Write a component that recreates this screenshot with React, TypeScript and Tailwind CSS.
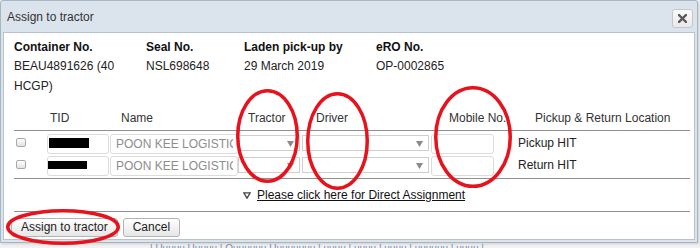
import React from "react";

function Arrow() {
  return (
    <svg width="7" height="6" viewBox="0 0 7 6" className="absolute right-[5px] top-[5px]">
      <polygon points="0,0 7,0 3.5,6" fill="#8a8a8a" />
    </svg>
  );
}

function Row({ pickup, redact }: { pickup: string; redact: string }) {
  return (
    <>
      <div className="h-[20px]">
        <div className="ml-[2px] mt-[4px] w-[10px] h-[9px] rounded-[2px] border border-[#a9a9a9] bg-gradient-to-b from-white to-[#e2e2e2]" />
      </div>
      <div className="h-[20px]">
        <div className="ml-[1px] w-[62px] h-[20px] border border-[#dcdcdc] rounded-[3px] bg-white">
          <div className={redact} />
        </div>
      </div>
      <div className="h-[20px]">
        <div className="w-[128px] h-[20px] border border-[#dcdcdc] rounded-[3px] bg-white pl-[5px] pr-[4px]">
          <div className="overflow-hidden whitespace-nowrap leading-[18px] text-[12px] text-[#8d8d8d]">
            POON KEE LOGISTICS PTE LTD
          </div>
        </div>
      </div>
      <div className="h-[20px]">
        <div className="relative mt-[1px] w-[62px] h-[16px] border border-[#cfcfcf] bg-white">
          <Arrow />
        </div>
      </div>
      <div className="h-[20px]">
        <div className="relative mt-[1px] w-[127px] h-[16px] border border-[#cfcfcf] bg-white">
          <Arrow />
        </div>
      </div>
      <div className="h-[20px]">
        <div className="w-[63px] h-[20px] border border-[#dcdcdc] rounded-[3px] bg-white" />
      </div>
      <div className="h-[20px]">
        <div className="mt-[1px] leading-[16px] text-[12px] text-[#222]">{pickup}</div>
      </div>
    </>
  );
}

export default function App() {
  return (
    <div className="relative w-[700px] h-[248px] overflow-hidden bg-[#f2f2f2] font-['Liberation_Sans',Arial,sans-serif] text-[12px] text-[#222]">
      <div className="w-[698px] h-[243px] flex flex-col border border-[#a7b5c2] bg-[#dbe4ed] rounded-t-[3px] shadow-[1px_1px_3px_rgba(0,0,0,0.15)]">
        <div className="h-[31px] flex items-center justify-between pl-[6px] pr-[4px]">
          <span className="text-[12px] text-[#333] leading-[16px]">Assign to tractor</span>
          <div className="mt-[3px] w-[21px] h-[19px] flex items-center justify-center rounded-[3px] border border-[#c6c6c6] bg-gradient-to-b from-[#fafafa] to-[#e9e9e9]">
            <svg width="9" height="9" viewBox="0 0 9 9">
              <path d="M1 1 L8 8 M8 1 L1 8" stroke="#5a5a5a" strokeWidth="2.4" strokeLinecap="square" />
            </svg>
          </div>
        </div>
        <div className="ml-[2px] mr-[2px] mb-[2px] flex-1 bg-white border border-[#b8c3cd] pl-[10px] pr-[4px] pt-[5px] flex flex-col">
          <div className="grid grid-cols-[132px_98px_132px_1fr]">
            <div className="font-bold leading-[18px] text-[#111]">Container No.</div>
            <div className="font-bold leading-[18px] text-[#111]">Seal No.</div>
            <div className="font-bold leading-[18px] text-[#111]">Laden pick-up by</div>
            <div className="font-bold leading-[18px] text-[#111]">eRO No.</div>
            <div className="leading-[20px] w-[124px]">BEAU4891626 (40 HCGP)</div>
            <div className="leading-[20px]">NSL698648</div>
            <div className="leading-[20px]">29 March 2019</div>
            <div className="leading-[20px]">OP-0002865</div>
          </div>

          <div className="mt-[14px] grid grid-cols-[32px_64px_128px_64px_129px_87px_1fr] border-b border-[#8f8f8f] pb-[4px] leading-[16px] text-[#333]">
            <div />
            <div className="pl-[4px]">TID</div>
            <div className="pl-[11px]">Name</div>
            <div className="pl-[10px]">Tractor</div>
            <div className="pl-[14px]">Driver</div>
            <div className="pl-[18px]">Mobile No.</div>
            <div className="pl-[17px]">Pickup &amp; Return Location</div>
          </div>

          <div className="grid grid-cols-[32px_64px_128px_64px_129px_87px_1fr] gap-y-[2px] pt-[3px] pb-[2px] border-b border-[#8f8f8f]">
            <Row pickup="Pickup HIT" redact="ml-[1px] mt-[3px] w-[40px] h-[10px] bg-black" />
            <Row pickup="Return HIT" redact="mt-[4px] w-[39px] h-[8px] bg-black" />
          </div>

          <div className="pt-[8px] pb-[8px] flex items-center ml-[229px] leading-[16px]">
            <svg width="8" height="7" viewBox="0 0 8 7" className="mt-[1px]">
              <polygon points="0.8,0.8 7.2,0.8 4,6.2" fill="none" stroke="#444" strokeWidth="1.3" />
            </svg>
            <a className="ml-[6px] underline text-[#111]">Please click here for Direct Assignment</a>
          </div>

          <div className="h-px bg-[#8f8f8f]" />

          <div className="pt-[6px] -ml-[3px] flex gap-[5px]">
            <button className="h-[19px] px-[9px] leading-[17px] text-[12px] text-[#222] rounded-[3px] border border-[#b3b3b3] bg-gradient-to-b from-white to-[#e6e6e6]">
              Assign to tractor
            </button>
            <button className="h-[19px] px-[9px] leading-[17px] text-[12px] text-[#222] rounded-[3px] border border-[#b3b3b3] bg-gradient-to-b from-white to-[#e6e6e6]">
              Cancel
            </button>
          </div>
        </div>
      </div>

      <div className="pl-[150px] h-[5px] overflow-hidden text-[10px] leading-[12px] text-[#7a8aa8] whitespace-nowrap">
        | Uuuuu Uuuuu | Ouuuuuu Uuuuuuuu | uuuu | uuuu | uuuu | uuuuuu | uuuu |
      </div>

      <svg className="absolute left-0 top-0 pointer-events-none" width="700" height="248" viewBox="0 0 700 248">
        <g fill="none" stroke="#e8121c" strokeWidth="3.5">
          <ellipse cx="267.5" cy="136" rx="29.75" ry="45.25" />
          <ellipse cx="337.5" cy="141" rx="29.75" ry="47.25" />
          <ellipse cx="473" cy="137" rx="37.25" ry="49.25" />
          <ellipse cx="63" cy="227" rx="55.25" ry="16.25" />
        </g>
      </svg>
    </div>
  );
}
